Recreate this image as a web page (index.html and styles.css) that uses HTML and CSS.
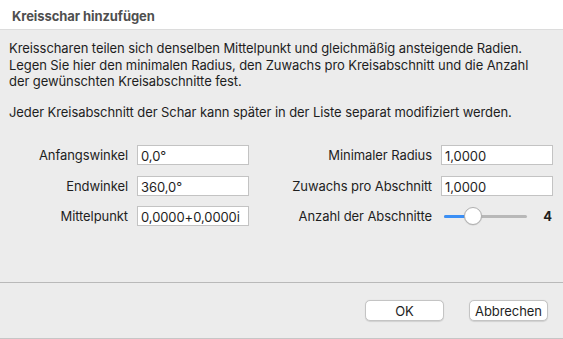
FILE: index.html
```html
<!DOCTYPE html>
<html lang="de">
<head>
<meta charset="utf-8">
<title>Kreisschar hinzufügen</title>
<link rel="stylesheet" href="styles.css">
</head>
<body>
<div class="dialog">
  <header class="titlebar">Kreisschar hinzufügen</header>
  <main class="content">
    <p class="intro">Kreisscharen teilen sich denselben Mittelpunkt und gleichmäßig ansteigende Radien.<br>Legen Sie hier den minimalen Radius, den Zuwachs pro Kreisabschnitt und die Anzahl<br>der gewünschten Kreisabschnitte fest.</p>
    <p class="note">Jeder Kreisabschnitt der Schar kann später in der Liste separat modifiziert werden.</p>
    <div class="form">
      <div class="group group-left">
        <label>Anfangswinkel</label><div class="field">0,0°</div>
        <label>Endwinkel</label><div class="field">360,0°</div>
        <label>Mittelpunkt</label><div class="field">0,0000+0,0000i</div>
      </div>
      <div class="group group-right">
        <label>Minimaler Radius</label><div class="field">1,0000</div>
        <label>Zuwachs pro Abschnitt</label><div class="field">1,0000</div>
        <label>Anzahl der Abschnitte</label>
        <div class="slider-row">
          <div class="slider">
            <div class="track"></div>
            <div class="fill"></div>
            <div class="knob"></div>
          </div>
          <span class="value">4</span>
        </div>
      </div>
    </div>
  </main>
  <footer class="buttons">
    <button class="btn">OK</button>
    <button class="btn">Abbrechen</button>
  </footer>
</div>
</body>
</html>
```

FILE: styles.css
```css
* { box-sizing: border-box; }
html, body { margin: 0; padding: 0; }
body {
  width: 563px;
  height: 339px;
  font-family: "Inter", "Liberation Sans", sans-serif;
  font-size: 13px;
  letter-spacing: -0.08px;
  color: #1e1e1e;
  background: #ececec;
  overflow: hidden;
}
.dialog {
  width: 563px;
  height: 339px;
  display: flex;
  flex-direction: column;
  background: #ececec;
  border-bottom: 1px solid #c6c6c6;
}
.titlebar {
  height: 30px;
  background: #ffffff;
  border-bottom: 1px solid #dcdcdc;
  padding: 8px 0 0 12px;
  font-weight: 700;
  color: #4f4f4f;
  font-size: 13px;
}
.content {
  padding: 10px 10px 0 9px;
  height: 253px;
  border-bottom: 1px solid #b9b9b9;
}
.intro, .note {
  margin: 0;
  line-height: 16.5px;
  white-space: nowrap;
}
.intro { margin-bottom: 14px; }
.note { margin-bottom: 25px; }
.form {
  display: flex;
  justify-content: space-between;
  padding-left: 11px;
}
.group {
  display: grid;
  row-gap: 10.5px;
  column-gap: 9px;
  align-items: center;
}
.group-left { grid-template-columns: 108px 112px; }
.group-right { grid-template-columns: 150px 112px; }
label { text-align: right; white-space: nowrap; }
.field {
  height: 20px;
  background: #fff;
  border: 1px solid #c3c3c3;
  padding: 1px 3px 0;
  line-height: 18px;
  white-space: nowrap;
}
.slider-row {
  display: flex;
  align-items: center;
  justify-content: space-between;
  height: 20px;
  padding-left: 3px;
}
.slider {
  position: relative;
  width: 83px;
  height: 20px;
}
.track {
  position: absolute;
  left: 0; right: 0; top: 9px;
  height: 3px;
  border-radius: 2px;
  background: #b8b8b8;
}
.fill {
  position: absolute;
  left: 0; top: 9px;
  width: 26px;
  height: 3px;
  border-radius: 2px;
  background: #3b8ff5;
}
.knob {
  position: absolute;
  left: 20px; top: 1px;
  width: 18px; height: 18px;
  border-radius: 50%;
  background: #fff;
  border: 1px solid #b0b0b0;
  box-shadow: 0 0.5px 1px rgba(0,0,0,0.15);
}
.value { font-weight: 700; padding-right: 1px; }
.buttons {
  flex: 1;
  display: flex;
  justify-content: flex-end;
  align-items: flex-start;
  gap: 25px;
  padding: 17px 15px 0 0;
}
.btn {
  width: 79px;
  height: 21px;
  font-family: inherit;
  font-size: 13px;
  letter-spacing: -0.08px;
  color: #1e1e1e;
  background: #fff;
  border: 1px solid #c4c4c4;
  border-radius: 5px;
  box-shadow: 0 0.5px 1px rgba(0,0,0,0.12);
  padding: 0;
}
```
